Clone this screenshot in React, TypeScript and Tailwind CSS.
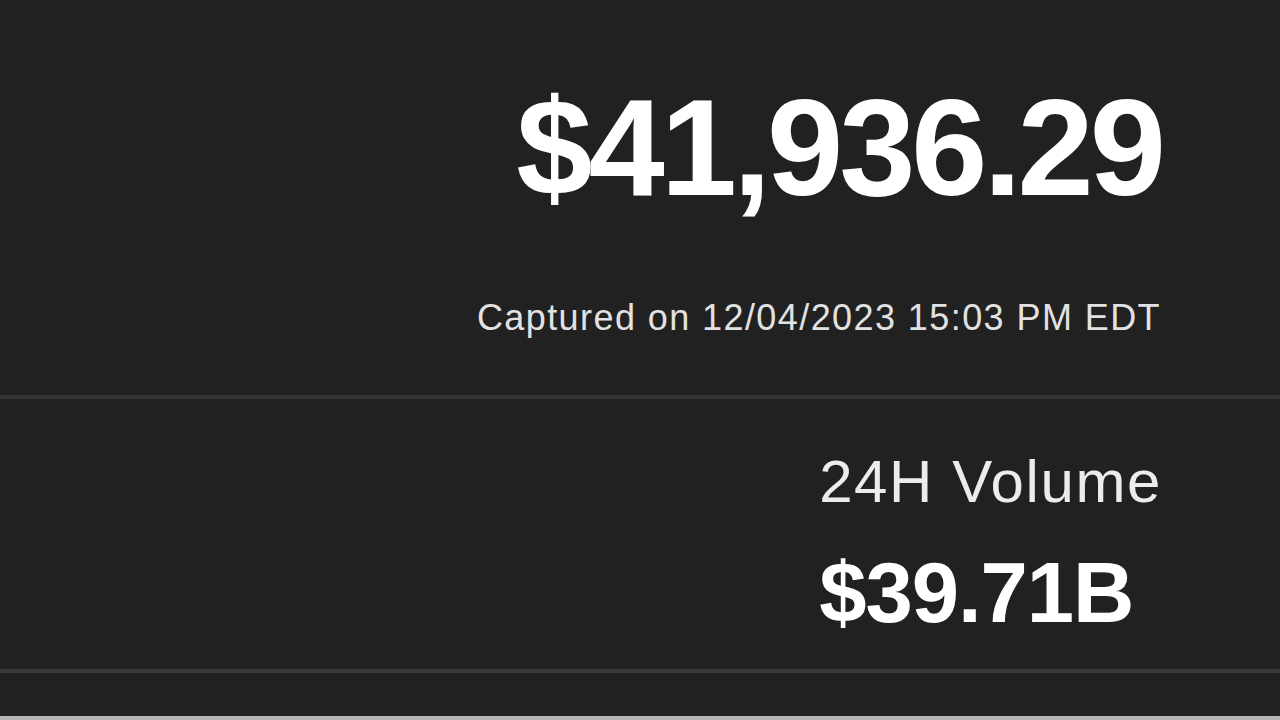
export default function App() {
  return (
    <div
      className="flex h-[720px] w-full flex-col bg-[#212121] text-white"
      style={{ fontFamily: '"Liberation Sans", Arial, sans-serif' }}
    >
      {/* Price header */}
      <div className="flex h-[395px] flex-col items-end pt-[79px]">
        <div className="mr-[118px] text-[137px] font-bold leading-none tracking-[-4px]">
          $41,936.29
        </div>
        <div className="mr-[119px] mt-[84px] text-[36px] leading-none tracking-[1.42px] text-[#e2e2e2]">
          Captured on 12/04/2023 15:03 PM EDT
        </div>
      </div>

      <div className="h-[4px] bg-[#353535]" />

      {/* 24H volume */}
      <div className="flex h-[270px] flex-col items-end">
        <div className="mr-[118px] mt-[53px] flex flex-col items-start">
          <div className="text-[60px] leading-none tracking-[1.6px] text-[#ececec]">
            24H Volume
          </div>
          <div className="mt-[38px] text-[85px] font-bold leading-none tracking-[-1px]">
            $39.71B
          </div>
        </div>
      </div>

      <div className="h-[4px] bg-[#3a3a3a]" />

      <div className="flex-1" />
      <div className="h-[4px] bg-[#b5b5b5]" />
    </div>
  );
}
